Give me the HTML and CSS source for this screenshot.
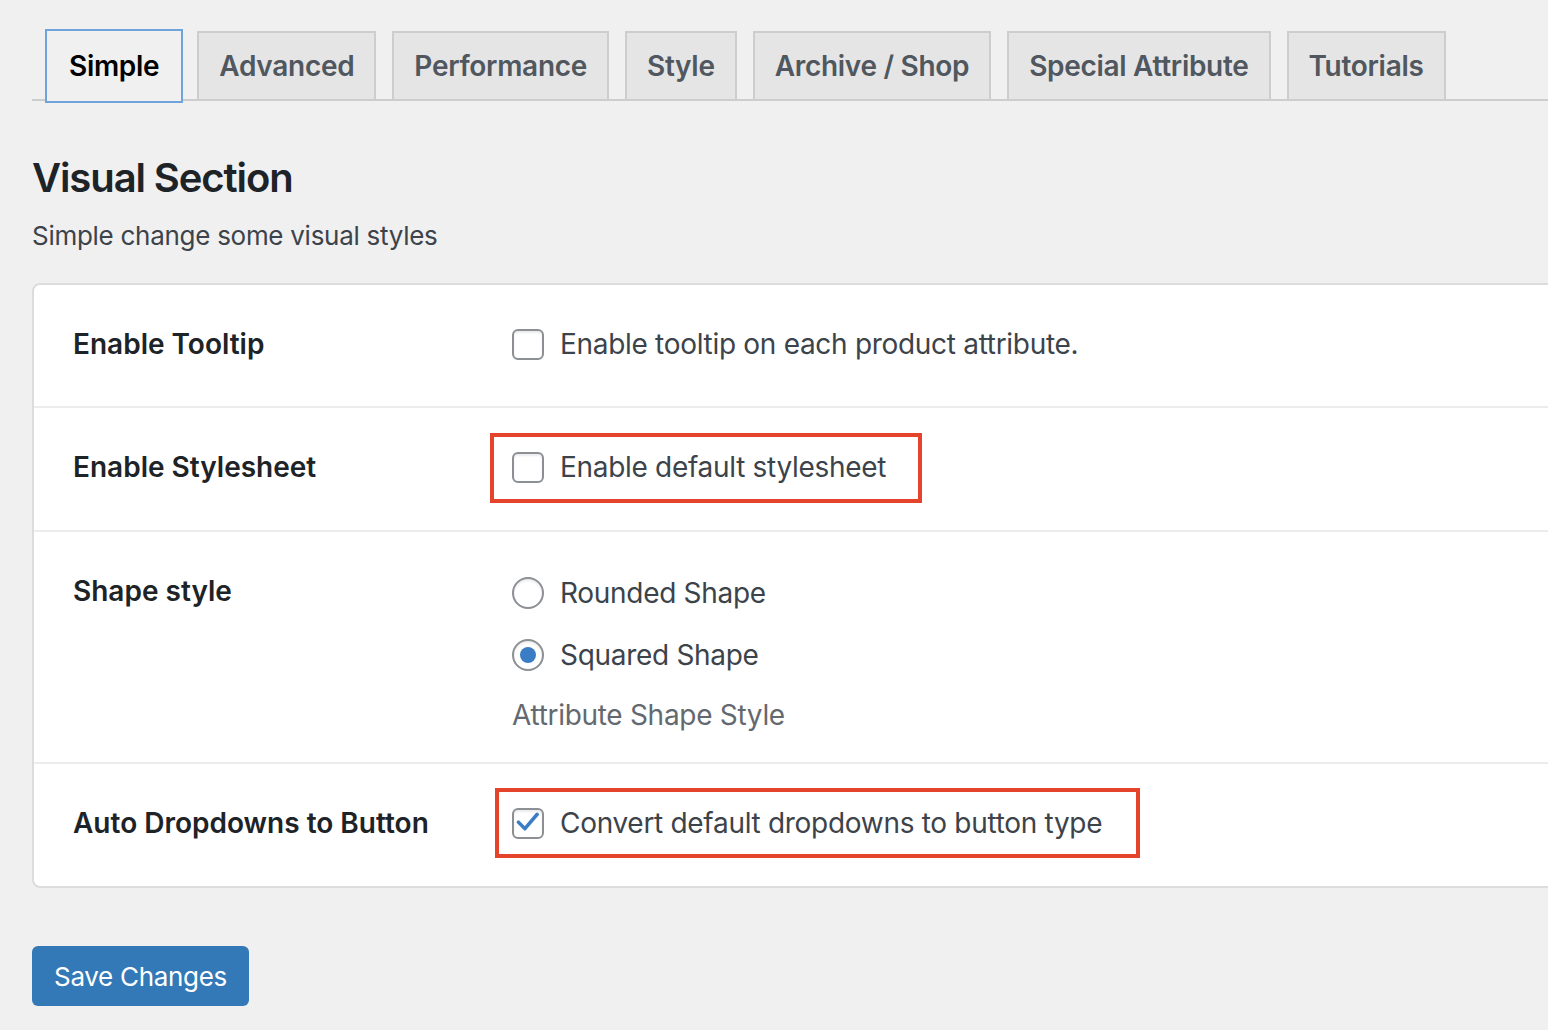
FILE: index.html
```html
<!DOCTYPE html>
<html lang="en">
<head>
    <meta charset="UTF-8">
    <title>Visual Section</title>
    <link rel="stylesheet" href="styles.css">
</head>
<body>
    <div class="wrap">
        <nav class="tabs">
            <a class="tab active" href="#">Simple</a>
            <a class="tab" href="#">Advanced</a>
            <a class="tab" href="#">Performance</a>
            <a class="tab" href="#">Style</a>
            <a class="tab" href="#">Archive / Shop</a>
            <a class="tab" href="#">Special Attribute</a>
            <a class="tab" href="#">Tutorials</a>
        </nav>

        <h2 class="section-title">Visual Section</h2>
        <p class="section-desc">Simple change some visual styles</p>

        <div class="card">
            <div class="row">
                <div class="label">Enable Tooltip</div>
                <div class="field">
                    <label class="choice"><span class="box"></span>Enable tooltip on each product attribute.</label>
                </div>
            </div>
            <div class="row tall">
                <div class="label">Enable Stylesheet</div>
                <div class="field">
                    <label class="choice"><span class="box"></span>Enable default stylesheet</label>
                    <span class="mark mark-style"></span>
                </div>
            </div>
            <div class="row multi">
                <div class="label">Shape style</div>
                <div class="field options">
                    <label class="choice"><span class="radio"></span>Rounded Shape</label>
                    <label class="choice"><span class="radio on"></span>Squared Shape</label>
                    <p class="hint">Attribute Shape Style</p>
                </div>
            </div>
            <div class="row tall">
                <div class="label">Auto Dropdowns to Button</div>
                <div class="field">
                    <label class="choice"><span class="box">
                        <svg viewBox="0 0 32 32" width="28" height="28"><path d="M5 15 L12.5 22.5 L26.5 6" fill="none" stroke="#3b7dc5" stroke-width="4" stroke-linecap="round" stroke-linejoin="round"/></svg>
                    </span>Convert default dropdowns to button type</label>
                    <span class="mark mark-dropdown"></span>
                </div>
            </div>
        </div>

        <button class="btn-save">Save Changes</button>
    </div>
</body>
</html>
```

FILE: styles.css
```css
:root {
    --bg: #f0f0f1;
    --tab-bg: #e5e5e5;
    --tab-border: #cdcdcd;
    --text: #1d2327;
    --text-soft: #3c434a;
    --muted: #646970;
    --blue: #3379b7;
    --red: #e5432c;
}

body {
    margin: 0;
    background: var(--bg);
    font-family: Inter, "Liberation Sans", sans-serif;
    color: var(--text-soft);
    overflow-x: hidden;
}

.wrap {
    padding-left: 32px;
}

/* tabs */

.tabs {
    display: flex;
    gap: 16px;
    padding: 31px 0 0 15px;
    border-bottom: 2px solid var(--tab-border);
}

.tab {
    box-sizing: border-box;
    height: 70px;
    margin-bottom: -2px;
    padding: 0 20px;
    display: flex;
    align-items: center;
    background: var(--tab-bg);
    border: 2px solid var(--tab-border);
    color: #50575e;
    font-size: 28px;
    font-weight: 600;
    letter-spacing: -0.3px;
    text-decoration: none;
    white-space: nowrap;
}

.tab.active {
    background: var(--bg);
    border-color: var(--bg);
    color: #000;
    box-shadow: 0 0 0 2px #6fa3dc;
}

/* heading */

.section-title {
    margin: 51px 0 0;
    font-size: 40px;
    line-height: 52px;
    font-weight: 600;
    letter-spacing: -1.1px;
    color: var(--text);
}

.section-desc {
    margin: 14px 0 0;
    font-size: 26px;
    line-height: 36px;
    letter-spacing: -0.28px;
}

/* settings card */

.card {
    margin-top: 29px;
    width: calc(100% + 40px);
    background: #fff;
    border: 2px solid #dcdcde;
    border-radius: 8px;
}

.row {
    display: grid;
    grid-template-columns: 439px 1fr;
    padding: 39px 39px 42px;
    border-bottom: 2px solid #ececec;
}

.row.tall {
    padding-bottom: 43px;
}

.row:last-child {
    border-bottom: none;
}

.row.multi {
    padding-bottom: 27px;
}

.label {
    font-size: 28px;
    line-height: 40px;
    font-weight: 600;
    color: var(--text);
}

.field {
    position: relative;
}

.options {
    display: flex;
    flex-direction: column;
    align-items: flex-start;
    gap: 22px;
    padding-top: 2px;
}

.choice {
    display: inline-flex;
    align-items: center;
    gap: 16px;
    font-size: 28px;
    line-height: 40px;
    letter-spacing: -0.3px;
    color: var(--text-soft);
}

.box {
    box-sizing: border-box;
    width: 32px;
    height: 31px;
    display: flex;
    align-items: center;
    justify-content: center;
    border: 2px solid #8c8f94;
    border-radius: 6px;
    background: #fff;
    box-shadow: inset 0 2px 2px rgba(0, 0, 0, 0.08);
}

.radio {
    box-sizing: border-box;
    width: 32px;
    height: 32px;
    display: flex;
    align-items: center;
    justify-content: center;
    border: 2px solid #8c8f94;
    border-radius: 50%;
    background: #fff;
    box-shadow: inset 0 2px 2px rgba(0, 0, 0, 0.08);
}

.radio.on::after {
    content: '';
    width: 16px;
    height: 16px;
    border-radius: 50%;
    background: #3b7dc5;
}

.hint {
    margin: -2px 0 0;
    font-size: 28px;
    line-height: 40px;
    letter-spacing: -0.3px;
    color: var(--muted);
}

/* red highlight boxes drawn over the fields */

.mark {
    position: absolute;
    box-sizing: border-box;
    height: 70px;
    border: 4px solid var(--red);
    pointer-events: none;
}

.mark-style {
    left: -22px;
    top: -14px;
    width: 432px;
}

.mark-dropdown {
    left: -17px;
    top: -15px;
    width: 645px;
}

/* button */

.btn-save {
    margin-top: 58px;
    height: 60px;
    padding: 0 22px;
    background: var(--blue);
    color: #fff;
    border: none;
    border-radius: 6px;
    font-family: inherit;
    font-size: 26px;
    letter-spacing: -0.3px;
    cursor: pointer;
}
```
